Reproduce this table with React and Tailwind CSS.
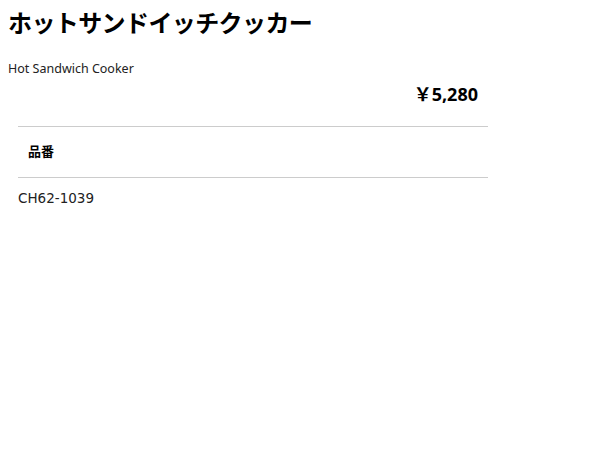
export default function App() {
  return (
    <div className="min-h-[450px] bg-white px-2 pt-[6px] text-black font-['Noto_Sans','Noto_Sans_CJK_JP',sans-serif]">
      <h1 className="text-[24px] font-bold leading-[34px] tracking-[-0.6px]">ホットサンドイッチクッカー</h1>

      <p className="mt-[20px] text-[12.5px] leading-[18px] text-[#222]">Hot Sandwich Cooker</p>

      <div className="w-[480px] pr-[10px] mt-[3px] text-right">
        <span className="text-[18px] font-bold leading-[26px]">￥5,280</span>
      </div>

      <div className="ml-[10px] w-[470px] mt-[19px]">
        <div className="border-t border-[#ccc] px-[10px] h-[51px] flex items-center">
          <span className="text-[13px] font-bold">品番</span>
        </div>
        <div className="border-t border-[#ccc]" />
      </div>

      <p className="ml-[10px] mt-[11px] text-[13.5px] leading-[18px] text-[#222] font-['DejaVu_Sans',sans-serif]">CH62-1039</p>
    </div>
  );
}
